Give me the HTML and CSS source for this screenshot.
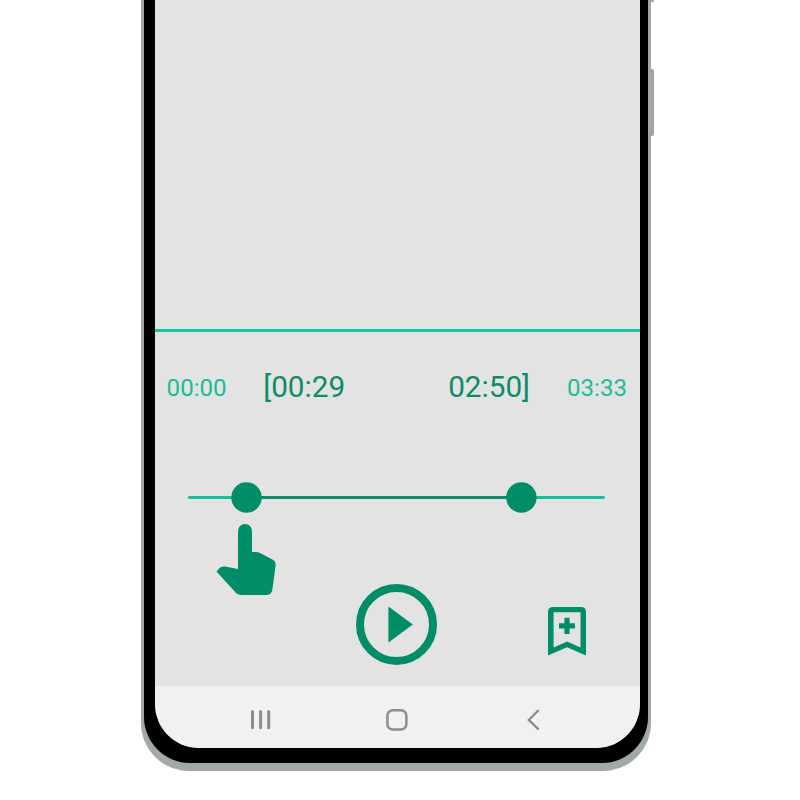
FILE: index.html
```html
<!DOCTYPE html>
<html lang="en">
<head>
<meta charset="utf-8">
<title>Audio trimmer</title>
<link rel="stylesheet" href="styles.css">
</head>
<body>
<div class="phone">
  <span class="side-button volume"></span>
  <span class="side-button power"></span>
  <div class="bezel">
    <main class="screen">
      <div class="preview"></div>
      <div class="times">
        <span class="time">00:00</span>
        <span class="time selected start">[00:29</span>
        <span class="time selected stop">02:50]</span>
        <span class="time">03:33</span>
      </div>
      <div class="slider">
        <svg width="485" height="32" viewBox="0 0 485 32">
          <path d="M34.5 15.4H448.5" stroke="#19bd99" stroke-width="3" stroke-linecap="round"/>
          <path d="M91 15.4H366" stroke="#14876a" stroke-width="3"/>
          <circle cx="91.5" cy="15.5" r="15.2" fill="#028d69"/>
          <circle cx="366.4" cy="15.5" r="15.2" fill="#028d69"/>
        </svg>
      </div>
      <div class="controls">
        <svg class="hand" width="60" height="73" viewBox="0 1 60 73" fill="#028d69">
          <path d="M22 46V8a7 7 0 0 1 14 0V29h4q2 0 4 1l12.500 6.500q3.500 2 3.100 6l-3.200 24.000q-.8 5.500-6.600 5.500H25q-3 0-5-2L.5 48.500l3-3.500Q5.500 43 9 43.600Z"/>
        </svg>
        <svg class="play" width="82" height="82" viewBox="0 0 82 82">
          <circle cx="41.500" cy="41.400" r="36.500" fill="none" stroke="#028d69" stroke-width="8"/>
          <path d="M33.400 23.500V59.500L57.800 41.400Z" fill="#028d69"/>
        </svg>
        <svg class="bookmark" width="38" height="49" viewBox="0 0 38 49" fill="#028d69">
          <path fill-rule="evenodd" d="M5 0H33q5 0 5 5V48.500L19 40.200 0 48.500V5Q0 0 5 0ZM5.600 5.300V40.500L19 34.500 32.500 40.500V5.300Z"/>
          <path d="M16.400 10.800h5.200v5.400H27v5.400h-5.400V27h-5.200v-5.400H11v-5.400h5.400Z"/>
        </svg>
      </div>
      <nav class="navbar">
        <svg width="20" height="22" viewBox="0 0 20 22" fill="none" stroke="#8c8c8c" stroke-width="3" stroke-linecap="round"><path d="M1.500 2.500V18.700M9.600 2.500V18.700M17.700 2.500V18.700"/></svg>
        <svg class="home" width="22" height="22" viewBox="0 0 22 22" fill="none" stroke="#8c8c8c" stroke-width="2.5"><rect x="1.400" y="1.300" width="19" height="19.200" rx="5.500"/></svg>
        <svg class="back" width="13" height="22" viewBox="0 0 13 22" fill="none" stroke="#8c8c8c" stroke-width="2.300" stroke-linecap="round"><path d="M11 1.800 1.800 10.900 11 19.900"/></svg>
      </nav>
    </main>
  </div>
</div>
</body>
</html>
```
FILE: styles.css
```css
* { box-sizing: border-box; }
body {
  margin: 0;
  background: #fff;
  font-family: Roboto, "Liberation Sans", sans-serif;
}
svg { display: block; flex: none; }
.phone {
  position: relative;
  width: 510px;
  height: 771px;
  margin-left: 141px;
  padding: 0 3px 8px;
  background: #a1aaa7;
  border-radius: 0 0 48px 48px;
}
.side-button {
  position: absolute;
  left: 509px;
  width: 4px;
  background: #a2a5a4;
  border-radius: 0 2px 2px 0;
}
.volume { top: 0; height: 2px; }
.power { top: 69px; height: 67px; }
.bezel {
  height: 763px;
  padding: 0 8px 15px 11px;
  background: #000;
  border-radius: 0 0 46px 46px;
}
.screen {
  display: flex;
  flex-direction: column;
  height: 748px;
  overflow: hidden;
  background: #e3e3e3;
  border-radius: 0 0 44px 44px;
}
.preview {
  flex: none;
  height: 332px;
  border-bottom: 3px solid #10c5a0;
}
.times {
  display: flex;
  align-items: flex-start;
  height: 150px;
  padding: 37px 13px 0 11.6px;
}
.time {
  color: #19bd99;
  font-size: 24.1px;
  line-height: 38px;
}
.selected {
  color: #0e8b69;
  font-size: 29.7px;
  line-height: 36px;
}
.start { margin-left: 36.7px; }
.stop { margin-left: auto; margin-right: 37px; }
.slider { height: 42px; }
.controls {
  display: flex;
  align-items: flex-start;
  height: 162px;
}
.hand { margin-left: 61px; }
.play { margin: 59px 0 0 79px; }
.bookmark { margin: 83px 0 0 111px; }
.navbar {
  display: flex;
  align-items: center;
  height: 62px;
  padding: 6px 0 0 96px;
  background: #f1f1f1;
}
.home { margin-left: 115px; }
.back { margin-left: 119px; }
```
